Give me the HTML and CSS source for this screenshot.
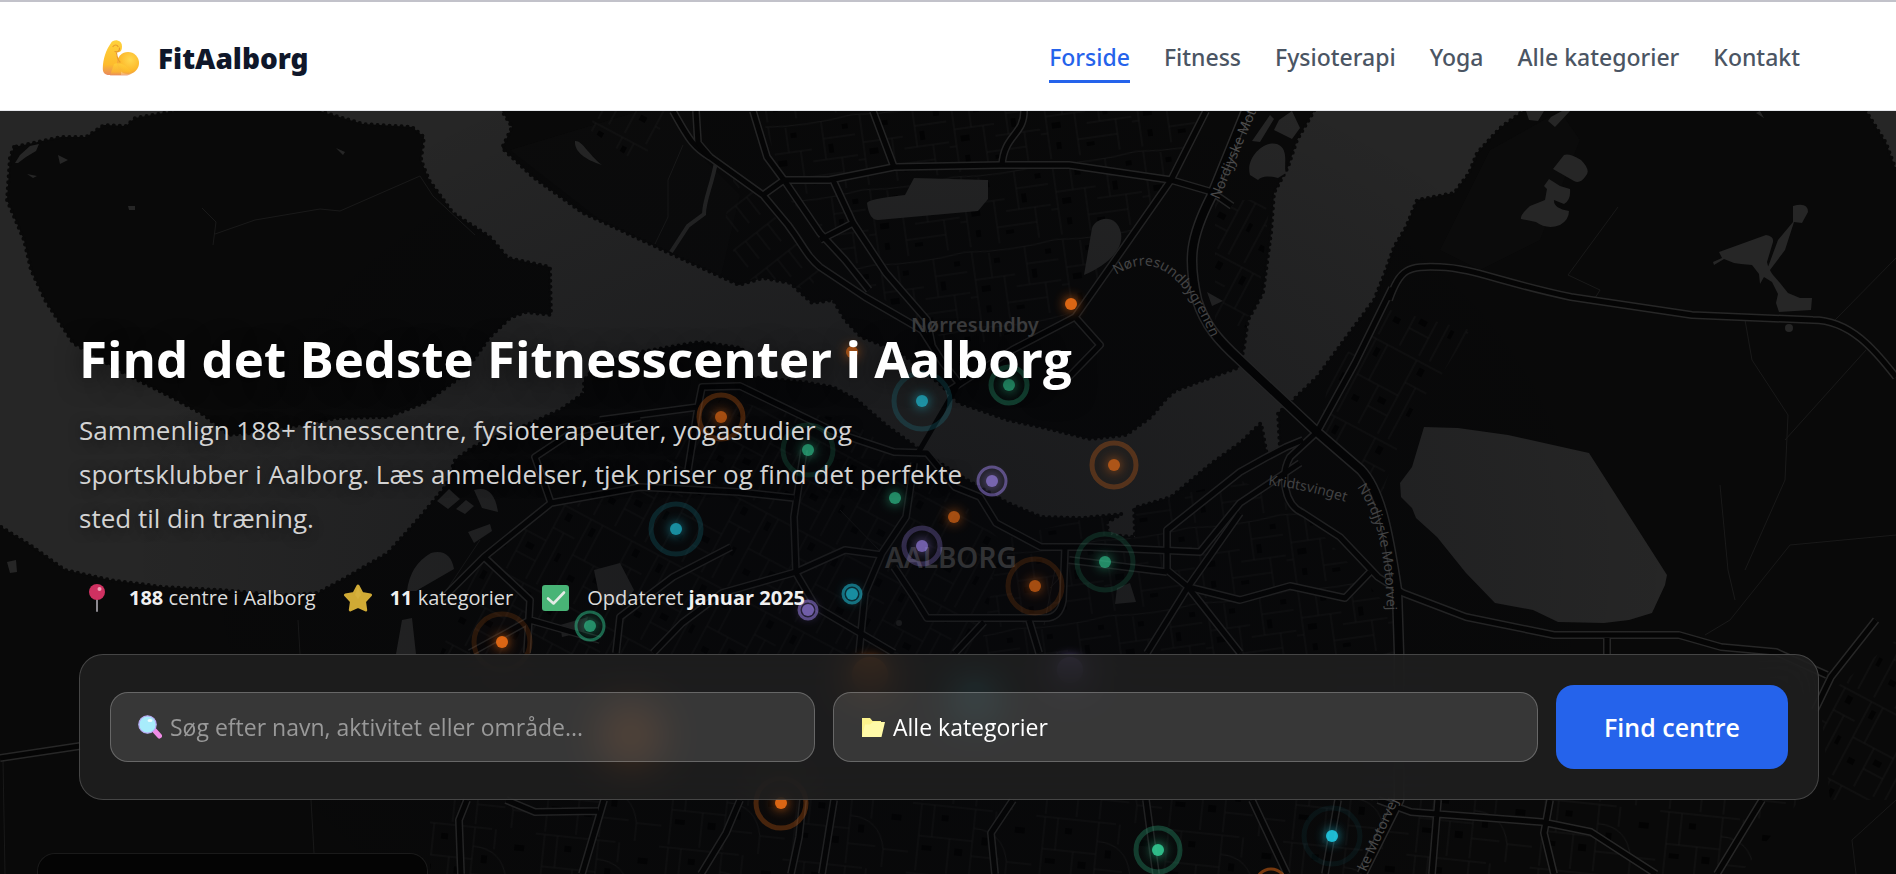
FILE: index.html
```html
<!DOCTYPE html>
<html lang="da">
<head>
<meta charset="utf-8">
<meta name="viewport" content="width=device-width, initial-scale=1">
<title>FitAalborg</title>
<link rel="stylesheet" href="styles.css">
</head>
<body>
<header class="site-header">
  <a class="brand" href="#">
    <svg class="brand-icon" viewBox="0 0 38 36" aria-hidden="true">
      <defs>
        <linearGradient id="arm" x1="0" y1="0" x2="0" y2="1"><stop offset="0" stop-color="#ffd23c"/><stop offset=".7" stop-color="#fdbb2c"/><stop offset="1" stop-color="#e88a5e"/></linearGradient>
        <radialGradient id="muscle" cx=".6" cy=".35" r=".7"><stop offset="0" stop-color="#ffd84e"/><stop offset=".7" stop-color="#fdb92b"/><stop offset="1" stop-color="#ec9448"/></radialGradient>
      </defs>
      <path fill="url(#arm)" d="M9 3c1-2 4-3 6.500-2.500 3 .5 4.500 3 4.500 6 0 3-1 5.500-3.500 5.800L14 12.500c.5 4 2 7 5 8.500v14H7c-4 0-6.500-2.500-6.200-7C1 19 4 10 9 3z"/>
      <circle fill="url(#muscle)" cx="26" cy="23" r="11"/>
      <path fill="url(#arm)" d="M12 24c5-2 12 0 18 9-2 2-4 2.500-7 2.500H8z" opacity=".75"/>
      <path d="M11 6.500c1.500-2 4-2 5 0M13 11.500c2.500 1 5-.5 4.500-3.500M14.500 13c.5 4 1.500 7 3.500 9" fill="none" stroke="#e79a2c" stroke-width="1.200" stroke-linecap="round"/>
    </svg>
    <span class="brand-name">FitAalborg</span>
  </a>
  <nav class="main-nav" aria-label="Hovedmenu">
    <a class="nav-link nav-link-active" href="#">Forside</a>
    <a class="nav-link" href="#">Fitness</a>
    <a class="nav-link" href="#">Fysioterapi</a>
    <a class="nav-link" href="#">Yoga</a>
    <a class="nav-link" href="#">Alle kategorier</a>
    <a class="nav-link" href="#">Kontakt</a>
  </nav>
</header>

<main class="hero">
  <svg class="map" viewBox="0 111 1896 763" preserveAspectRatio="xMidYMin slice" aria-hidden="true">
    <defs>
      <pattern id="streets-a" width="92" height="76" patternUnits="userSpaceOnUse" patternTransform="rotate(-8)">
        <path class="street" d="M0 4Q46 10 92 4M7 5v71M24 8v25M7 33h40M36 33v43M60 7v38M47 45h45M76 45v31M36 60h40M60 24h32M0 50h7"/>
        <path class="block" d="M12 40h9v6h-9zM28 14h6v5h-6zM64 30h5v9h-5zM44 64h8v4h-8zM80 12h6v5h-6zM14 60h5v7h-5z"/>
      </pattern>
      <pattern id="streets-b" width="76" height="88" patternUnits="userSpaceOnUse" patternTransform="rotate(28)">
        <path class="street" d="M0 5h76M6 5v83M19 5v40M6 45h46M52 5v83M30 45v43M52 30h24M64 30v58M30 68h22"/>
        <path class="block" d="M10 12h5v9h-5zM36 54h8v6h-8zM58 10h6v8h-6zM68 50h4v9h-4zM12 64h7v6h-7z"/>
      </pattern>
      <pattern id="streets-c" width="124" height="70" patternUnits="userSpaceOnUse" patternTransform="rotate(6)">
        <path class="street" d="M0 3H80M9 3v67M22 3v32M9 35h54M63 3v67M40 35v35M63 22q30 0 36 30v18M63 50h28M99 52h25M84 3v20"/>
        <path class="block" d="M13 44h10v5h-10zM46 44h8v7h-8zM72 30h6v8h-6zM104 16h10v6h-10zM30 12h7v6h-7z"/>
      </pattern>
      <pattern id="streets-d" width="14" height="34" patternUnits="userSpaceOnUse" patternTransform="rotate(-38)">
        <path class="street" d="M0 3h14M5 3v22"/>
      </pattern>
      <radialGradient id="shade" gradientUnits="userSpaceOnUse" cx="900" cy="560" r="780" gradientTransform="translate(0 170) scale(1 .7)">
        <stop offset="0" stop-color="#04060c" stop-opacity=".42"/><stop offset=".5" stop-color="#04060c" stop-opacity=".22"/><stop offset="1" stop-color="#04060c" stop-opacity="0"/>
      </radialGradient>
      <g id="shores">
        <path d="M-10 100H496L502 111L512 127L502 148L533 177L583 213L620 230L667 252L739 285L763 278L790 283L812 303L833 300L845 320L861 337L900 352L939 383L959 403L1008 420L1045 428L1090 439L1126 435L1151 417L1165 400L1175 391L1204 380L1240 367L1244 347L1248 320L1263 293L1271 233L1274 193L1288 167L1297 140L1314 111L1318 100H1534L1523 111L1500 128L1477 153L1469 173L1454 193L1417 200L1406 227L1394 247L1384 275L1374 300L1342 343L1317 377L1290 403L1278 413L1280 450L1267 455L1261 423L1240 443L1212 463L1171 497L1134 508L1135 537L1110 535L1106 523L1122 514L1082 518L1041 517L1008 503L967 480L927 455L886 425L857 400L833 387L804 382L751 377L742 348L700 342L640 352L600 362L584 380L584 393L560 410L531 423L500 435L473 447L455 460L445 487L420 517L388 553L347 577L318 593L280 595L220 590L163 587L110 580L65 570L33 547L-10 520Z"/>
        <path d="M1860 100L1866 111L1886 143L1896 170L1910 190V100Z"/>
      </g>
      <path id="quarry" d="M1424 427L1458 428L1508 435L1589 453L1667 575L1665 585L1652 613L1629 620L1604 623L1558 622L1533 610L1495 603L1466 573L1437 537L1416 518L1412 508L1401 497L1400 483L1412 467Z"/>
      <path id="island" d="M14 147L10 157L7 200L24 240L31 270L45 300L73 343L118 370L171 397L204 415L229 435L261 432L339 418L388 417L424 403L461 377L490 337L510 318L526 312L551 315L550 267L508 258L490 237L453 213L429 180L421 160L424 137L412 127L363 124L316 110L300 100H190L175 111L135 118L126 126L104 125L86 137L61 137Z"/>
      <g id="roads">
        <path d="M673 111C690 142 695 148 710 157L763 195L788 225C805 248 806 255 820 267L865 297L922 330L943 363L959 383"/>
        <path d="M696 111L698 143L710 157M753 111L767 157L784 180L820 233L845 260L869 290"/>
        <path d="M763 195L784 180L829 180L894 167L1000 165H1069L1171 180L1212 192L1232 206"/>
        <path d="M873 111L894 167M1024 111C1024 135 1004 135 1002 165M833 180L853 223L886 273L927 320L932 345M820 240L853 223"/>
        <path d="M1206 111L1171 180L1106 273L1075 317L1012 350L950 390M1075 317L1100 345L1064 382"/>
        <path d="M1389 300C1400 268 1408 266 1440 267S1500 282 1571 297L1692 315L1813 320C1850 320 1875 350 1896 377"/>
        <path d="M1392 288L1355 363L1317 432L1290 457C1280 475 1284 505 1303 513L1340 537L1378 577L1403 593L1466 617L1554 635L1679 635L1721 647L1776 652L1827 675"/>
        <path d="M1303 440L1286 447L1265 458L1240 472L1167 530V570L1188 587L1240 600L1290 586L1345 598L1370 572"/>
        <path d="M600 420L698 407L702 387L740 386L837 433L894 452L927 453L955 487L980 497L996 523L1041 547H1090L1200 552L1240 503L1300 463"/>
        <path d="M698 407L688 470M1065 547L1063 600Q1060 618 1045 618H927L914 597L894 567M1069 560L1167 572"/>
        <path d="M914 463L906 517L882 553L865 593L859 653M804 450L794 517L796 573L816 607L894 653"/>
        <path d="M441 600L484 557L551 503L640 487L739 492L794 498M551 503L535 457L571 433L640 417"/>
        <path d="M653 653L682 623L722 593L796 572L845 550L882 555M616 653L620 617L673 577L731 547"/>
        <path d="M1240 513L1188 587L1147 653M1188 587L1240 653M1029 620L1039 653M984 622L955 653"/>
        <path d="M484 557L530 600L527 653M470 653L530 620L600 640"/>
        <path d="M0 758L80 746M467 800L459 820L461 874M506 800L535 812L598 811M604 800L582 874"/>
        <path d="M740 800L726 833L701 874M803 800L799 837L791 874M834 800L822 874M1013 800L991 833L995 874M1146 800L1156 874M1252 800L1287 874"/>
        <path d="M1338 800L1325 874M1438 800L1432 874M1378 800L1411 812L1542 822L1591 832L1656 874M1550 800L1544 833L1554 874M1762 800L1717 874M1876 620L1831 677L1815 710M1607 638V654"/>
      </g>
      <path id="motorway" d="M1246 111L1211 197C1190 238 1188 260 1197 300C1205 325 1218 340 1240 360L1317 432L1361 470C1380 490 1388 530 1397 590L1399 653V800L1362 874"/>
      <path id="label-gren" d="M1116 275C1155 250 1185 275 1214 344"/>
      <path id="label-north" d="M1219 200L1262 98"/>
      <path id="label-kridt" d="M1268 485Q1310 490 1352 504"/>
      <path id="label-east" d="M1357 487C1380 520 1386 560 1387 620"/>
      <path id="label-south" d="M1366 872L1404 788"/>
    </defs>

    <rect class="land" x="0" y="111" width="1896" height="763"/>
    <g class="fields">
      <path d="M510 150L640 111H690L705 160L740 195L720 280L600 220Z"/>
      <path d="M1490 150L1560 111L1580 140L1540 240L1480 270L1440 250Z"/>
    </g>
    <path fill="url(#streets-a)" d="M760 111H1200L1165 190L1080 310L960 350L870 290L790 200Z"/>
    <path fill="url(#streets-d)" d="M735 170L820 270L810 290L740 278L725 220Z"/>
    <path fill="url(#streets-b)" d="M595 111H670L640 165L590 130ZM1215 200L1270 200L1255 330L1215 320Z"/>
    <path fill="url(#streets-b)" d="M480 560L560 500L640 490L720 400L850 420L960 500L1000 540L980 654H440Z"/>
    <path fill="url(#streets-a)" d="M1000 540L1240 480L1300 510L1400 620V654H980Z"/>
    <path fill="url(#streets-b)" d="M1330 370L1390 310L1470 330L1400 440L1380 500L1320 430ZM1820 700L1896 640V800H1830Z"/>
    <path fill="url(#streets-c)" d="M430 800H1800L1740 874H430Z"/>
    <use href="#shores" class="water"/>
    <use href="#quarry" class="water"/>
    <use href="#shores" class="shore-edge"/>
    <use href="#island" class="land"/>
    <use href="#island" class="shore-edge"/>

    <g class="water">
      <path d="M15 163L20 155L30 146L39 144L36 151L26 157L18 163ZM58 155L68 160L60 164ZM27 174L37 176L33 178ZM336 148L345 152L343 155ZM128 206h7v4h-6z"/>
      <path d="M575 141C582 140 587 153 602 165C586 160 574 152 575 141Z"/>
      <path d="M867 203Q868 199 905 195L914 178L988 180V199L978 211L878 220Q869 220 867 203Z"/>
      <path d="M1084 275L1092 228C1097 216 1117 214 1121 233C1124 250 1106 266 1084 275Z"/>
      <path d="M1250 175C1245 158 1264 140 1277 144C1290 149 1283 166 1286 173L1278 178Q1263 174 1258 180ZM1279 120L1292 111L1300 128L1292 139L1274 130ZM1252 141L1270 115L1274 119L1260 142Z"/>
      <path d="M1526 111H1544L1538 121L1529 120ZM1551 117L1562 111H1570L1555 127L1548 121ZM1756 113L1764 118L1760 111Z"/>
      <path d="M1564 155Q1569 153 1581 160Q1592 171 1585 177Q1580 184 1574 181L1553 169ZM1549 179L1560 186L1570 189Q1571 200 1564 204L1554 200Q1553 208 1569 211Q1569 220 1560 225Q1547 230 1536 222L1521 219Q1520 215 1530 206L1545 200L1547 189L1544 186Z"/>
      <path d="M1719 252L1766 235Q1774 236 1773 242L1767 262Q1768 268 1773 275L1780 283L1788 293L1800 298L1812 298L1811 310L1779 312L1776 303L1778 294L1772 282L1764 277L1760 284L1759 274L1752 265L1741 264L1734 263L1724 259L1714 265L1713 262L1722 258ZM1793 206Q1808 202 1808 212L1802 223L1794 222L1785 250L1770 270L1768 267L1778 240L1793 222Z"/>
      <path d="M449 489L460 499L448 509L437 501ZM466 500L474 506L465 514L456 509ZM474 490Q494 484 498 512L482 508ZM468 532L490 524L492 531L474 543ZM431 553Q450 548 454 569L416 591H407Q410 565 431 553ZM594 570L620 563L634 590L623 606L600 600Z"/>
      <path d="M1117 588L1130 583L1136 602L1115 604ZM1207 292L1223 301L1212 306ZM7 562L16 560L17 572L10 573ZM402 620L412 618L416 654H396ZM560 625L588 617L584 632L562 637Z"/>
      <circle cx="1789" cy="328" r="4"/><circle cx="899" cy="623" r="3"/>
    </g>
    <path class="river" d="M716 162C712 185 704 200 704 214L688 226L671 252"/>
    <g class="path-lines">
      <path d="M215 234L255 220L320 209L340 211L420 176L433 196L475 235M202 208L216 222L213 245M683 145L668 180V217L655 244"/>
      <path d="M1745 320L1752 360L1788 415L1785 480L1745 570M1866 350L1785 440M1720 485L1728 570L1735 600M1896 535L1790 545L1730 620L1705 635M1896 800L1852 840L1856 874M298 620L300 654M311 800L314 853M3 760L5 874"/>
      <path d="M1835 320L1896 258M1618 207L1568 275L1600 290L1595 298M840 510L882 553M440 600L480 540M1055 570L1044 625M1065 572L1050 588"/>
    </g>
    <use href="#roads" class="road-case"/>
    <use href="#motorway" class="motorway-case"/>
    <use href="#roads" class="road-core"/>
    <use href="#motorway" class="motorway-core"/>
    <path class="road-core" d="M959 383L918 453"/>

    <text class="place" x="911" y="332">Nørresundby</text>
    <text class="city" x="885" y="568">AALBORG</text>
    <g class="road-label">
      <text><textPath href="#label-gren">Nørresundbygrenen</textPath></text>
      <text><textPath href="#label-north">Nordjyske Mot</textPath></text>
      <text><textPath href="#label-kridt">Kridtsvinget</textPath></text>
      <text><textPath href="#label-east">Nordjyske Motorvej</textPath></text>
      <text><textPath href="#label-south">ke Motorvej</textPath></text>
    </g>
    <rect fill="url(#shade)" x="0" y="111" width="1896" height="763"/>

    <g class="pins">
      <g class="pin orange"><circle class="dot" cx="1071" cy="304" r="6"/><circle class="dot dim" cx="852" cy="352" r="6"/><circle class="dot dim" cx="954" cy="517" r="6"/>
        <circle class="ring" cx="721" cy="417" r="22"/><circle class="dot dim" cx="721" cy="417" r="6"/>
        <circle class="ring faint" cx="1035" cy="586" r="27"/><circle class="dot dim" cx="1035" cy="586" r="6"/>
        <circle class="ring" cx="1114" cy="465" r="22"/><circle class="dot dim" cx="1114" cy="465" r="6"/>
        <circle class="ring faint" cx="502" cy="642" r="28"/><circle class="dot" cx="502" cy="642" r="6"/>
        <circle class="ring" cx="781" cy="803" r="25"/><circle class="dot" cx="781" cy="803" r="6"/>
        <circle class="ring bright" cx="1271" cy="884" r="15"/>
        <circle class="dot dim" cx="631" cy="735" r="30"/><circle class="dot dim" cx="870" cy="675" r="18"/></g>
      <g class="pin cyan"><circle class="ring faint" cx="922" cy="401" r="28"/><circle class="dot dim" cx="922" cy="401" r="6"/>
        <circle class="ring faint" cx="676" cy="529" r="25"/><circle class="dot dim" cx="676" cy="529" r="6"/>
        <circle class="ring bright" cx="852" cy="594" r="9"/><circle class="dot dim" cx="852" cy="594" r="6"/>
        <circle class="ring trace" cx="1332" cy="836" r="28"/><circle class="dot" cx="1332" cy="836" r="6"/>
        <circle class="dot dim" cx="975" cy="700" r="18"/></g>
      <g class="pin green"><circle class="ring" cx="1009" cy="385" r="18"/><circle class="dot dim" cx="1009" cy="385" r="6"/>
        <circle class="ring faint" cx="808" cy="450" r="25"/><circle class="dot dim" cx="808" cy="450" r="6"/>
        <circle class="dot dim" cx="895" cy="498" r="6"/>
        <circle class="ring faint" cx="1105" cy="562" r="28"/><circle class="dot dim" cx="1105" cy="562" r="6"/>
        <circle class="ring bright" cx="590" cy="626" r="14"/><circle class="dot dim" cx="590" cy="626" r="6"/>
        <circle class="ring" cx="1158" cy="850" r="22"/><circle class="dot" cx="1158" cy="850" r="6"/></g>
      <g class="pin purple"><circle class="ring bright" cx="992" cy="481" r="14"/><circle class="dot dim" cx="992" cy="481" r="6"/>
        <circle class="ring" cx="922" cy="546" r="18"/><circle class="dot dim" cx="922" cy="546" r="6"/>
        <circle class="ring bright" cx="808" cy="610" r="9"/><circle class="dot dim" cx="808" cy="610" r="6"/>
        <circle class="dot dim" cx="1070" cy="670" r="13"/></g>
    </g>
  </svg>

  <div class="legend"></div>

  <div class="hero-content">
    <h1 class="hero-title">Find det Bedste Fitnesscenter i Aalborg</h1>
    <p class="hero-lead">Sammenlign 188+ fitnesscentre, fysioterapeuter, yogastudier og sportsklubber i Aalborg. Læs anmeldelser, tjek priser og find det perfekte sted til din træning.</p>
    <ul class="stats">
      <li class="stat">
        <svg class="stat-icon" viewBox="0 0 36 28" aria-hidden="true"><path d="M18 14v13" stroke="#8d8a90" stroke-width="2" stroke-linecap="round"/><circle cx="18" cy="8" r="8" fill="#cf3161"/><circle cx="20.500" cy="5" r="2" fill="#f0a5b8"/></svg>
        <span><strong>188</strong> centre i Aalborg</span>
      </li>
      <li class="stat">
        <svg class="stat-icon" viewBox="0 0 36 28" aria-hidden="true"><path d="M18 2l4 7.500 8.500 1.500-6 6.500 1.200 8.500-7.700-3.500-7.700 3.500 1.200-8.500-6-6.500 8.500-1.500z" fill="#d0aa35" stroke="#d0aa35" stroke-width="3" stroke-linejoin="round"/><path d="M18 3l3 8-3 4-3-4z" fill="#d6b13d"/></svg>
        <span><strong>11</strong> kategorier</span>
      </li>
      <li class="stat">
        <svg class="stat-icon" viewBox="0 0 36 28" aria-hidden="true"><rect x="5" y="1" width="27" height="26" rx="3" fill="#48b476"/><path d="M11 14.500l5.500 5L27 8.500" fill="none" stroke="#e4ebe6" stroke-width="2.600" stroke-linecap="round" stroke-linejoin="round"/></svg>
        <span>Opdateret <strong>januar 2025</strong></span>
      </li>
    </ul>
    <form class="search" onsubmit="return false">
      <label class="field">
        <svg class="field-icon" viewBox="0 0 24 24" aria-label="Søg"><path d="M16.500 15.500l5 5.500" stroke="#f08be6" stroke-width="5" stroke-linecap="round"/><circle cx="9.500" cy="9.500" r="8.700" fill="#a8ecfb" stroke="#b9a9f4" stroke-width="1.200"/><ellipse cx="12" cy="5.500" rx="2.500" ry="1.600" fill="#effdff"/></svg>
        <input class="control" type="search" placeholder="Søg efter navn, aktivitet eller område...">
      </label>
      <label class="field">
        <svg class="field-icon" viewBox="0 0 24 24" aria-label="Kategori"><path d="M1 3h8l2.500 3H20v3L17 22H1z" fill="#fdf38c"/><path d="M4 9.500h5L12 7h12l-3.500 15H1z" fill="#fffaa8"/></svg>
        <select class="control"><option>Alle kategorier</option><option>Fitness</option><option>Fysioterapi</option><option>Yoga</option></select>
      </label>
      <button class="submit" type="submit">Find centre</button>
    </form>
  </div>
</main>
</body>
</html>
```
FILE: styles.css
```css
* { box-sizing: border-box; }

body {
  margin: 0;
  min-height: 100vh;
  display: flex;
  flex-direction: column;
  overflow: hidden;
  background: #080808;
  font-family: "Open Sans", "Noto Sans", sans-serif;
}

.site-header {
  display: flex;
  align-items: center;
  justify-content: space-between;
  flex-wrap: wrap;
  min-height: 111px;
  padding: 4px 96px 0;
  border-top: 2px solid #c2c2ca;
  border-bottom: 1px solid #e5e7eb;
  background: #fff;
}

.brand {
  display: flex;
  align-items: center;
  gap: 18px;
  padding-left: 6px;
  color: #0f172a;
  text-decoration: none;
}
.brand-icon { width: 38px; height: 36px; }
.brand-name { font-family: "Noto Sans", sans-serif; font-size: 28px; font-weight: 900; }

.main-nav { display: flex; flex-wrap: wrap; gap: 34px; }
.nav-link {
  padding: 5px 0 5px;
  border-bottom: 3px solid transparent;
  color: #4b5563;
  font-family: "Noto Sans", sans-serif;
  font-size: 23px;
  font-weight: 500;
  line-height: 36px;
  text-decoration: none;
}
.nav-link-active { border-color: #2563eb; color: #2563eb; }

.hero {
  position: relative;
  flex: 1;
  overflow: hidden;
  color: #fff;
}

.map { position: absolute; inset: 0; width: 100%; height: 100%; }
.land { fill: #090909; }
.water { fill: #262626; }
.fields { fill: #0b0b0b; }
.shore-edge { fill: none; stroke: #090909; stroke-width: 4; stroke-linecap: round; stroke-dasharray: 0 6; }
.street { fill: none; stroke: #161616; stroke-width: 1; }
.block { fill: #030303; }
.river { fill: none; stroke: #262626; stroke-width: 4; }
.path-lines { fill: none; stroke: #191919; stroke-width: 1; }
.road-case, .road-core, .motorway-case, .motorway-core { fill: none; stroke-linejoin: round; }
.road-case { stroke: #272727; stroke-width: 8; }
.road-core { stroke: #050505; stroke-width: 5; }
.motorway-case { stroke: #2a2a2a; stroke-width: 11; }
.motorway-core { stroke: #040404; stroke-width: 8; }
.place, .city, .road-label { font-family: "Noto Sans", sans-serif; fill: #4c4c4c; }
.place { font-size: 20px; font-weight: 600; }
.city { font-size: 28px; font-weight: 600; }
.road-label { font-size: 14px; fill: #505050; }

.orange { --pin: #f97316; }
.cyan { --pin: #22d3ee; }
.green { --pin: #34d399; }
.purple { --pin: #a78bfa; }
.dot { fill: var(--pin); opacity: .88; filter: drop-shadow(0 0 6px var(--pin)); }
.dim { opacity: .65; }
.ring { fill: var(--pin); fill-opacity: .06; stroke: var(--pin); stroke-width: 5; opacity: .26; }
.bright { stroke-width: 3; opacity: .46; }
.faint { opacity: .14; }
.trace { opacity: .05; }

.legend {
  position: absolute;
  left: 37px;
  bottom: 0;
  width: 391px;
  height: 21px;
  border: 1px solid #1a1a1a;
  border-bottom: 0;
  border-radius: 18px 18px 0 0;
  background: #040404;
}

.hero-content { position: relative; padding: 213px 77px 0 79px; }

.hero-title {
  margin: 0;
  font-size: 51px;
  font-weight: 700;
  line-height: 68px;
  text-shadow: 0 4px 24px rgba(0, 0, 0, .6);
}

.hero-lead {
  max-width: 910px;
  margin: 16px 0 0;
  color: #d3d3d3;
  font-size: 26px;
  line-height: 44px;
  text-shadow: 0 2px 12px rgba(0, 0, 0, .5);
}

.stats {
  display: flex;
  flex-wrap: wrap;
  gap: 24px;
  margin: 42px 0 0;
  padding: 0;
  color: #dcdcdc;
  font-size: 20px;
  line-height: 32px;
  list-style: none;
}
.stat { display: flex; align-items: center; gap: 14px; }
.stat strong { color: #f0f0f0; }
.stat-icon { width: 36px; height: 28px; }

.search {
  display: flex;
  align-items: center;
  gap: 18px;
  margin-top: 40px;
  padding: 30px;
  border: 1px solid rgba(255, 255, 255, .18);
  border-radius: 24px;
  background: rgba(34, 34, 34, .8);
  backdrop-filter: blur(20px);
}

.field {
  display: flex;
  flex: 1;
  align-items: center;
  gap: 8px;
  min-width: 0;
  height: 70px;
  padding: 0 27px;
  border: 1px solid rgba(255, 255, 255, .24);
  border-radius: 18px;
  background: rgba(255, 255, 255, .12);
}
.field-icon { flex: none; width: 24px; height: 24px; }

.control {
  flex: 1;
  min-width: 0;
  padding: 0;
  border: 0;
  outline: 0;
  appearance: none;
  background: transparent;
  color: #fff;
  font: inherit;
  font-size: 23px;
  line-height: 36px;
}
.control::placeholder { color: #999; opacity: 1; }
.control option { color: #111; }

.submit {
  flex: none;
  height: 84px;
  padding: 0 48px;
  border: 0;
  border-radius: 18px;
  background: #2563eb;
  color: #fff;
  font: inherit;
  font-size: 25px;
  font-weight: 600;
}
```
